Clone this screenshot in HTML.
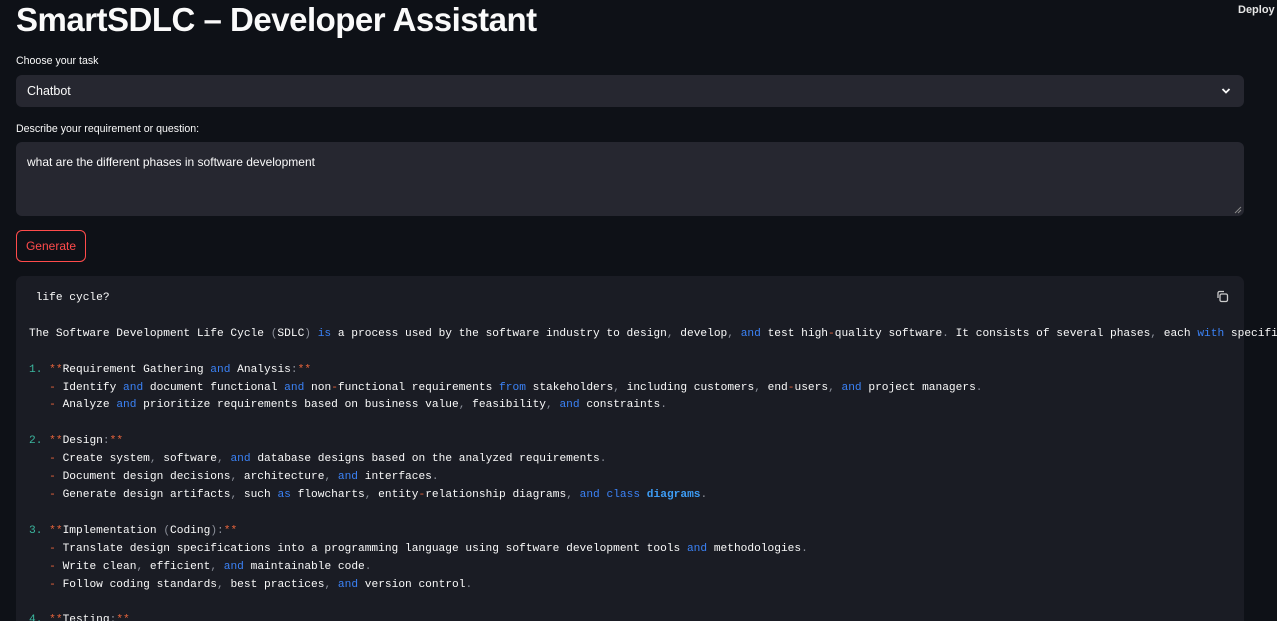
<!DOCTYPE html>
<html><head><meta charset="utf-8"><style>
html,body{margin:0;padding:0;background:#0e1117;width:1277px;height:621px;overflow:hidden;font-family:"Liberation Sans",sans-serif;color:#fafafa}
.wrap{position:absolute;left:0;top:0;width:1277px;height:621px;overflow:hidden}
.title{position:absolute;left:16px;top:0px;font-size:33px;font-weight:bold;letter-spacing:-0.5px;line-height:40px}
.deploy{position:absolute;left:1238px;top:4px;font-size:11px;font-weight:bold;color:#e6e6e6}
.lbl{position:absolute;left:16px;font-size:10.6px;color:#fafafa}
.sel{position:absolute;left:16px;top:75px;width:1228px;height:32px;background:#262730;border-radius:6px}
.sel span{position:absolute;left:11px;top:9px;font-size:12.5px}
.ta{position:absolute;left:16px;top:142px;width:1228px;height:74px;background:#262730;border-radius:6px}
.ta span{position:absolute;left:11px;top:13px;font-size:12px}
.btn{position:absolute;left:16px;top:230px;width:68px;height:30px;border:1px solid #ff4b4b;border-radius:6px;color:#ff4b4b;font-size:12px;text-align:center;line-height:30px}
.code{position:absolute;left:16px;top:276px;width:1228px;height:360px;background:#1a1c24;border-radius:7px}
pre{position:absolute;left:29px;top:290px;margin:0;font-family:"Liberation Mono",monospace;font-size:11.2px;line-height:17.9px;color:#fafafa;white-space:pre}
.k{color:#3b82f6}.p{color:#8b8f99}.o{color:#e8643c}.n{color:#3bb8a0}.b{color:#3d9cf5;font-weight:bold}
</style></head><body><div class="wrap">
<div class="title">SmartSDLC – Developer Assistant</div>
<div class="deploy">Deploy</div>
<div class="lbl" style="top:55px">Choose your task</div>
<div class="sel"><span>Chatbot</span>
<svg style="position:absolute;left:1205px;top:12px" width="10" height="8" viewBox="0 0 10 8"><path d="M1.5 2 L5 5.5 L8.5 2" stroke="#fafafa" stroke-width="1.8" fill="none"/></svg></div>
<div class="lbl" style="top:123px">Describe your requirement or question:</div>
<div class="ta"><span>what are the different phases in software development</span>
<svg style="position:absolute;left:1218px;top:64px" width="8" height="8"><path d="M1 7 L7 1 M4 7 L7 4" stroke="#888" stroke-width="1"/></svg></div>
<div class="btn">Generate</div>
<div class="code">
<svg style="position:absolute;left:1200px;top:14px" width="13" height="13" viewBox="0 0 13 13"><rect x="4" y="4" width="7.5" height="7.5" rx="1.5" stroke="#ccc" stroke-width="1.3" fill="none"/><path d="M2 8 V3 a1.5 1.5 0 0 1 1.5 -1.5 H8" stroke="#ccc" stroke-width="1.3" fill="none"/></svg>
</div>
<pre> life cycle?

The Software Development Life Cycle <span class="p">(</span>SDLC<span class="p">)</span> <span class="k">is</span> a process used by the software industry to design<span class="p">,</span> develop<span class="p">,</span> <span class="k">and</span> test high<span class="o">-</span>quality software<span class="p">.</span> It consists of several phases<span class="p">,</span> each <span class="k">with</span> specific goals.

<span class="n">1.</span> <span class="o">**</span>Requirement Gathering <span class="k">and</span> Analysis<span class="p">:</span><span class="o">**</span>
   <span class="o">-</span> Identify <span class="k">and</span> document functional <span class="k">and</span> non<span class="o">-</span>functional requirements <span class="k">from</span> stakeholders<span class="p">,</span> including customers<span class="p">,</span> end<span class="o">-</span>users<span class="p">,</span> <span class="k">and</span> project managers<span class="p">.</span>
   <span class="o">-</span> Analyze <span class="k">and</span> prioritize requirements based on business value<span class="p">,</span> feasibility<span class="p">,</span> <span class="k">and</span> constraints<span class="p">.</span>

<span class="n">2.</span> <span class="o">**</span>Design<span class="p">:</span><span class="o">**</span>
   <span class="o">-</span> Create system<span class="p">,</span> software<span class="p">,</span> <span class="k">and</span> database designs based on the analyzed requirements<span class="p">.</span>
   <span class="o">-</span> Document design decisions<span class="p">,</span> architecture<span class="p">,</span> <span class="k">and</span> interfaces<span class="p">.</span>
   <span class="o">-</span> Generate design artifacts<span class="p">,</span> such <span class="k">as</span> flowcharts<span class="p">,</span> entity<span class="o">-</span>relationship diagrams<span class="p">,</span> <span class="k">and</span> <span class="k">class</span> <span class="b">diagrams</span><span class="p">.</span>

<span class="n">3.</span> <span class="o">**</span>Implementation <span class="p">(</span>Coding<span class="p">):</span><span class="o">**</span>
   <span class="o">-</span> Translate design specifications into a programming language using software development tools <span class="k">and</span> methodologies<span class="p">.</span>
   <span class="o">-</span> Write clean<span class="p">,</span> efficient<span class="p">,</span> <span class="k">and</span> maintainable code<span class="p">.</span>
   <span class="o">-</span> Follow coding standards<span class="p">,</span> best practices<span class="p">,</span> <span class="k">and</span> version control<span class="p">.</span>

<span class="n">4.</span> <span class="o">**</span>Testing<span class="p">:</span><span class="o">**</span></pre>
</div></body></html>
